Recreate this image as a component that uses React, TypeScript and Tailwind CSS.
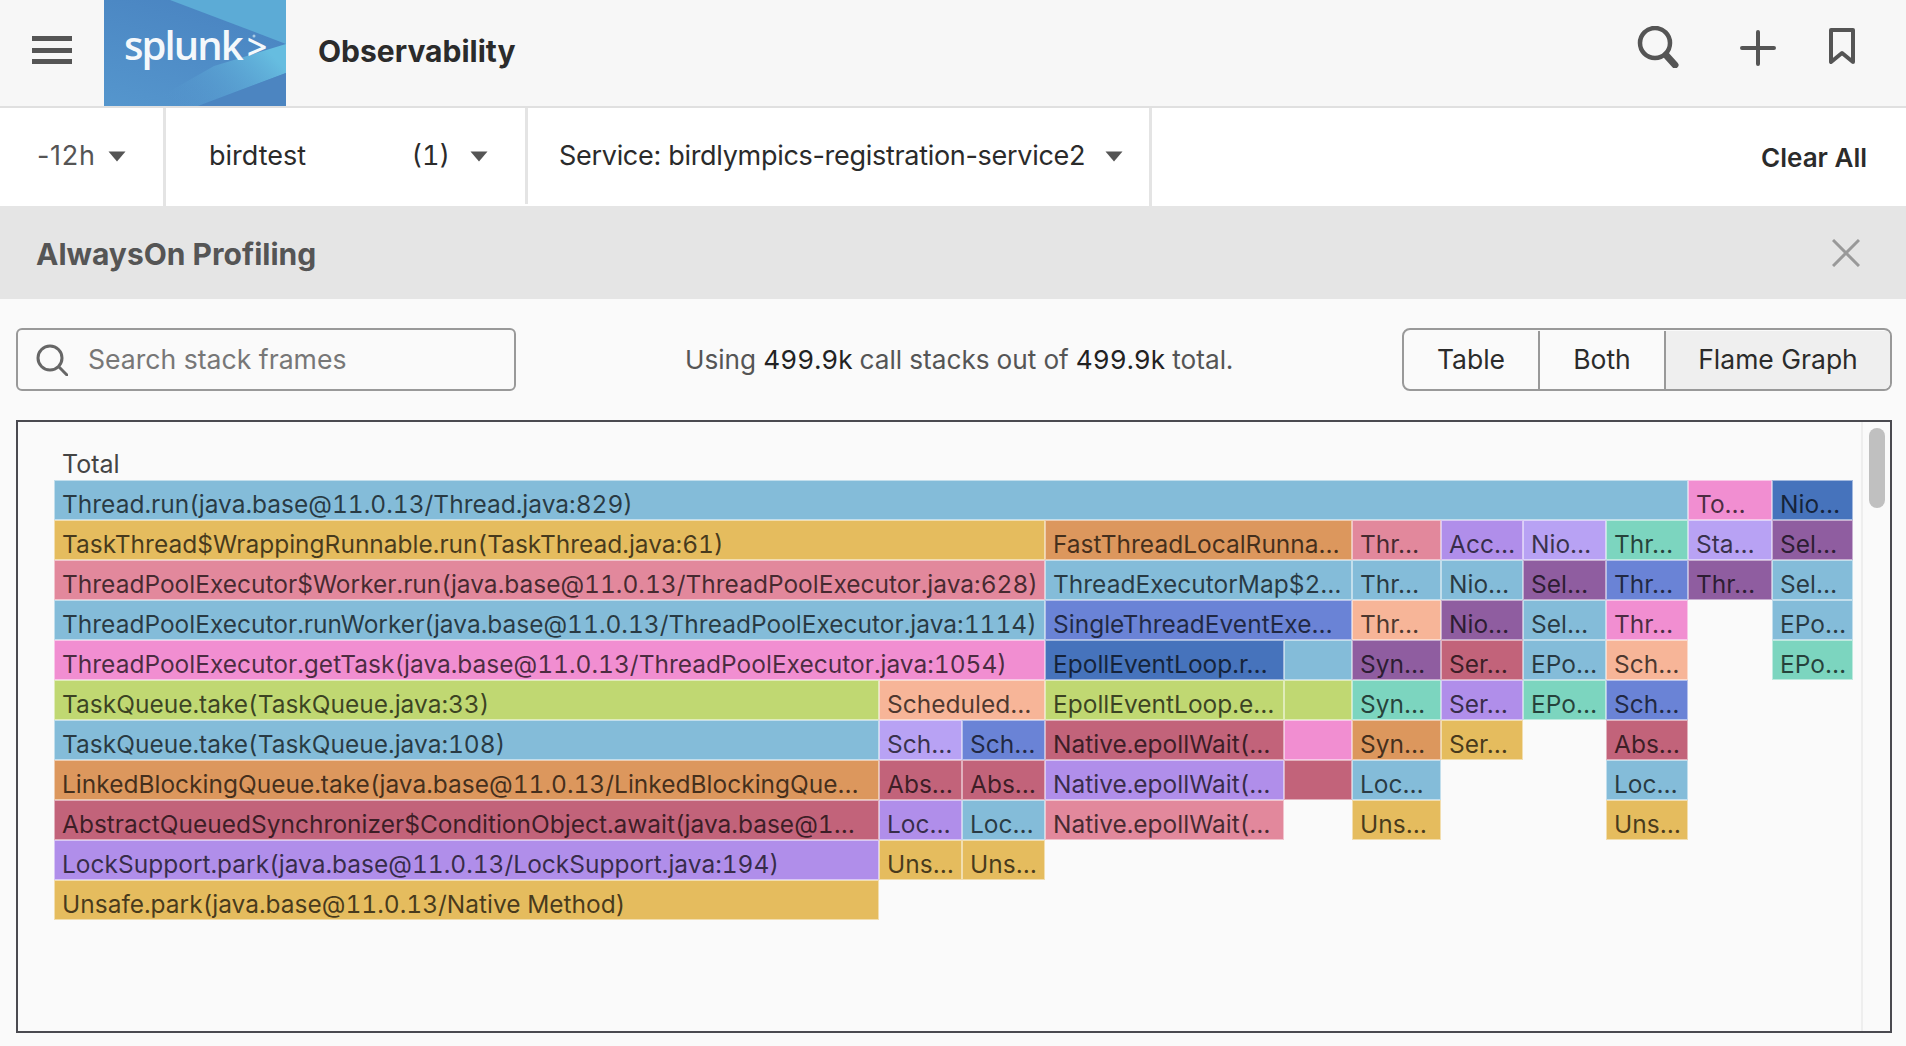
import React from "react";

const C: Record<string, string> = {
  blue: "#84bcd9",
  yellow: "#e5bc5e",
  rose: "#e2889c",
  pink: "#f18ed1",
  green: "#c0d872",
  orange: "#dc975d",
  crimson: "#c2637a",
  purple: "#b08eea",
  lavender: "#b8a2f4",
  teal: "#7cd5bf",
  violet: "#8f5da0",
  indigo: "#6a83d6",
  navy: "#4673bc",
  peach: "#f7b598",
};

type Cell = [number, string | null, string];
// each cell: width in px, colour key (null = empty space), label
const ROWS: Cell[][] = [
  [[1634, "blue", "Thread.run(java.base@11.0.13/Thread.java:829)"], [84, "pink", "To…"], [81, "navy", "Nio…"]],
  [[991, "yellow", "TaskThread$WrappingRunnable.run(TaskThread.java:61)"], [307, "orange", "FastThreadLocalRunna…"], [89, "rose", "Thr…"], [82, "purple", "Acc…"], [83, "lavender", "Nio…"], [82, "teal", "Thr…"], [84, "lavender", "Sta…"], [81, "violet", "Sel…"]],
  [[991, "rose", "ThreadPoolExecutor$Worker.run(java.base@11.0.13/ThreadPoolExecutor.java:628)"], [307, "blue", "ThreadExecutorMap$2…"], [89, "blue", "Thr…"], [82, "blue", "Nio…"], [83, "violet", "Sel…"], [82, "indigo", "Thr…"], [84, "violet", "Thr…"], [81, "blue", "Sel…"]],
  [[991, "blue", "ThreadPoolExecutor.runWorker(java.base@11.0.13/ThreadPoolExecutor.java:1114)"], [307, "indigo", "SingleThreadEventExe…"], [89, "peach", "Thr…"], [82, "violet", "Nio…"], [83, "blue", "Sel…"], [82, "pink", "Thr…"], [84, null, ""], [81, "blue", "EPo…"]],
  [[991, "pink", "ThreadPoolExecutor.getTask(java.base@11.0.13/ThreadPoolExecutor.java:1054)"], [239, "navy", "EpollEventLoop.r…"], [68, "blue", ""], [89, "violet", "Syn…"], [82, "crimson", "Ser…"], [83, "blue", "EPo…"], [82, "peach", "Sch…"], [84, null, ""], [81, "teal", "EPo…"]],
  [[825, "green", "TaskQueue.take(TaskQueue.java:33)"], [166, "peach", "Scheduled…"], [239, "green", "EpollEventLoop.e…"], [68, "green", ""], [89, "teal", "Syn…"], [82, "purple", "Ser…"], [83, "teal", "EPo…"], [82, "indigo", "Sch…"]],
  [[825, "blue", "TaskQueue.take(TaskQueue.java:108)"], [83, "lavender", "Sch…"], [83, "indigo", "Sch…"], [239, "crimson", "Native.epollWait(…"], [68, "pink", ""], [89, "orange", "Syn…"], [82, "yellow", "Ser…"], [83, null, ""], [82, "crimson", "Abs…"]],
  [[825, "orange", "LinkedBlockingQueue.take(java.base@11.0.13/LinkedBlockingQue…"], [83, "crimson", "Abs…"], [83, "crimson", "Abs…"], [239, "purple", "Native.epollWait(…"], [68, "crimson", ""], [89, "blue", "Loc…"], [82, null, ""], [83, null, ""], [82, "blue", "Loc…"]],
  [[825, "crimson", "AbstractQueuedSynchronizer$ConditionObject.await(java.base@1…"], [83, "purple", "Loc…"], [83, "blue", "Loc…"], [239, "rose", "Native.epollWait(…"], [68, null, ""], [89, "yellow", "Uns…"], [82, null, ""], [83, null, ""], [82, "yellow", "Uns…"]],
  [[825, "purple", "LockSupport.park(java.base@11.0.13/LockSupport.java:194)"], [83, "yellow", "Uns…"], [83, "yellow", "Uns…"]],
  [[825, "yellow", "Unsafe.park(java.base@11.0.13/Native Method)"]],
];

function Caret({ className = "" }: { className?: string }) {
  return (
    <svg width="18" height="11" viewBox="0 0 18 11" className={className}>
      <path d="M0.5 0.5 H17.5 L9 10.5 Z" fill="#555" />
    </svg>
  );
}

function Logo() {
  return (
    <div className="relative h-[106px] w-[182px] shrink-0 overflow-hidden bg-[#4a88c2]">
      <svg width="182" height="106" viewBox="0 0 182 106" className="absolute inset-0">
        <defs>
          <linearGradient id="g1" x1="0.5" y1="0" x2="0" y2="1">
            <stop offset="0" stopColor="#4a85c2" />
            <stop offset="1" stopColor="#5596cd" />
          </linearGradient>
          <linearGradient id="g2" x1="0.1" y1="0.8" x2="1" y2="0.4">
            <stop offset="0" stopColor="#5596cd" stopOpacity="0" />
            <stop offset="1" stopColor="#66bde0" />
          </linearGradient>
        </defs>
        <rect width="182" height="106" fill="url(#g1)" />
        <polygon points="66,0 182,0 182,44" fill="#5cabd6" />
        <polygon points="182,44 182,73 94,106 40,106 110,66" fill="url(#g2)" />
        <polygon points="182,73 182,106 94,106" fill="#4c85c1" />
        <text x="20" y="60" fontFamily="'Open Sans', sans-serif" fontSize="40" fontWeight="600" fill="#f4f8fb" letterSpacing="-1.9">
          splunk<tspan dx="5" fontSize="36" fontWeight="600">&gt;</tspan>
        </text>
        <circle cx="150" cy="36" r="1.5" fill="#a9cbe4" />
      </svg>
    </div>
  );
}

function Flame() {
  return (
    <div className="flex h-[613px] w-[1876px] border-2 border-[#4a4a50]">
      <div className="flex-1 pl-[36px] pt-[24px]">
        <div className="h-[34px] pl-[8px] text-[25px] leading-[36px] text-[#444]">Total</div>
        {ROWS.map((row, i) => (
          <div key={i} className="flex h-[40px]">
            {row.map(([w, col, label], j) =>
              col ? (
                <div
                  key={j}
                  className="shrink-0 overflow-hidden whitespace-nowrap border border-white/50 pl-[7px] pt-[7px] text-[24.5px] leading-[32px] tabular-nums text-black/70"
                  style={{ width: w, backgroundColor: C[col] }}
                >
                  {label}
                </div>
              ) : (
                <div key={j} className="shrink-0" style={{ width: w }} />
              )
            )}
          </div>
        ))}
      </div>
      <div className="flex w-[29px] justify-center border-l-2 border-[#eeeeee] pt-[6px]">
        <div className="h-[80px] w-[16px] rounded-full bg-[#c0c0c0]" />
      </div>
    </div>
  );
}

export default function App() {
  return (
    <div className="flex h-[1046px] w-[1906px] flex-col overflow-hidden bg-[#fafafa] font-['Inter',sans-serif] text-[#2b2b2b]">
      <header className="flex h-[108px] items-start border-b-2 border-[#e0e0e0] bg-[#f7f7f7]">
        <div className="ml-[32px] mr-[32px] mt-[36px] flex h-[28px] w-[40px] flex-col justify-between">
          <div className="h-[5px] bg-[#555]" />
          <div className="h-[5px] bg-[#555]" />
          <div className="h-[5px] bg-[#555]" />
        </div>
        <Logo />
        <div className="ml-[32px] mt-[30px] text-[30px] font-bold leading-[42px] text-[#2b2b2b]">Observability</div>
        <div className="ml-auto mr-[51px] mt-[26px] flex items-start gap-[60px]">
          <svg width="42" height="42" viewBox="0 0 42 42" fill="none" stroke="#555">
            <circle cx="18" cy="17" r="15" strokeWidth="4.5" />
            <path d="M29 29 L38 39" strokeWidth="7" strokeLinecap="round" />
          </svg>
          <svg width="36" height="36" viewBox="0 0 36 36" fill="none" stroke="#555" strokeWidth="4" strokeLinecap="round" className="mt-[4px] ml-[1px]">
            <path d="M18 2 V34 M2 18 H34" />
          </svg>
          <svg width="26" height="36" viewBox="0 0 26 36" fill="none" stroke="#555" strokeWidth="4" strokeLinejoin="round" className="mt-[2px] -ml-[7px]">
            <path d="M2 2 H24 V34 L13 25 L2 34 Z" />
          </svg>
        </div>
      </header>

      <div className="flex h-[98px] items-stretch bg-white text-[27px]">
        <div className="flex w-[166px] items-center justify-between border-r-[3px] border-[#e4e4e4] pb-[1px] pl-[37px] pr-[37px] text-[#555]">
          <span className="tracking-[0.7px]">-12h</span>
          <Caret />
        </div>
        <div className="mb-[2px] flex w-[362px] items-center border-r-[3px] border-[#e4e4e4] pl-[43px] pr-[37px]">
          <span>birdtest</span>
          <span className="ml-auto mr-[20px] tabular-nums">(1)</span>
          <Caret />
        </div>
        <div className="flex w-[624px] items-center border-r-[3px] border-[#e4e4e4] pb-[1px] pl-[31px]">
          <span className="tracking-[-0.3px]">Service: birdlympics-registration-service2</span>
          <Caret className="ml-[20px]" />
        </div>
        <div className="ml-auto flex items-center pr-[39px] text-[26px] font-semibold">Clear All</div>
      </div>

      <div className="flex h-[93px] items-center justify-between bg-[#e5e5e5] pl-[36px] pr-[46px]">
        <span className="pt-[3px] text-[30px] font-bold text-[#555]">AlwaysOn Profiling</span>
        <svg width="28" height="28" viewBox="0 0 28 28" stroke="#999" strokeWidth="3" className="mt-[1px]">
          <path d="M1 1 L27 27 M27 1 L1 27" />
        </svg>
      </div>

      <div className="flex items-center pl-[16px] pr-[14px] pt-[29px]">
        <div className="flex h-[63px] w-[500px] items-center rounded-[6px] border-2 border-[#999] pl-[18px]">
          <svg width="32" height="32" viewBox="0 0 32 32" fill="none" stroke="#666" strokeWidth="3">
            <circle cx="14" cy="14" r="12" />
            <path d="M23 23 L31 31" strokeLinecap="round" />
          </svg>
          <span className="ml-[20px] pt-[1px] text-[26.6px] text-[#777]">Search stack frames</span>
        </div>
        <div className="flex-1 pt-[1px] text-center text-[26.2px] tabular-nums text-[#555]">
          Using <span className="text-[#222]">499.9k</span> call stacks out of <span className="text-[#222]">499.9k</span> total.
        </div>
        <div className="flex h-[63px] w-[490px] overflow-hidden rounded-[8px] border-2 border-[#999] pt-[1px] text-[26.5px]">
          <div className="flex w-[136px] items-center justify-center border-r-2 border-[#999]">Table</div>
          <div className="flex w-[126px] items-center justify-center border-r-2 border-[#999]">Both</div>
          <div className="flex flex-1 items-center justify-center bg-[#efefef]">Flame Graph</div>
        </div>
      </div>

      <div className="pl-[16px] pt-[29px]">
        <Flame />
      </div>
    </div>
  );
}
